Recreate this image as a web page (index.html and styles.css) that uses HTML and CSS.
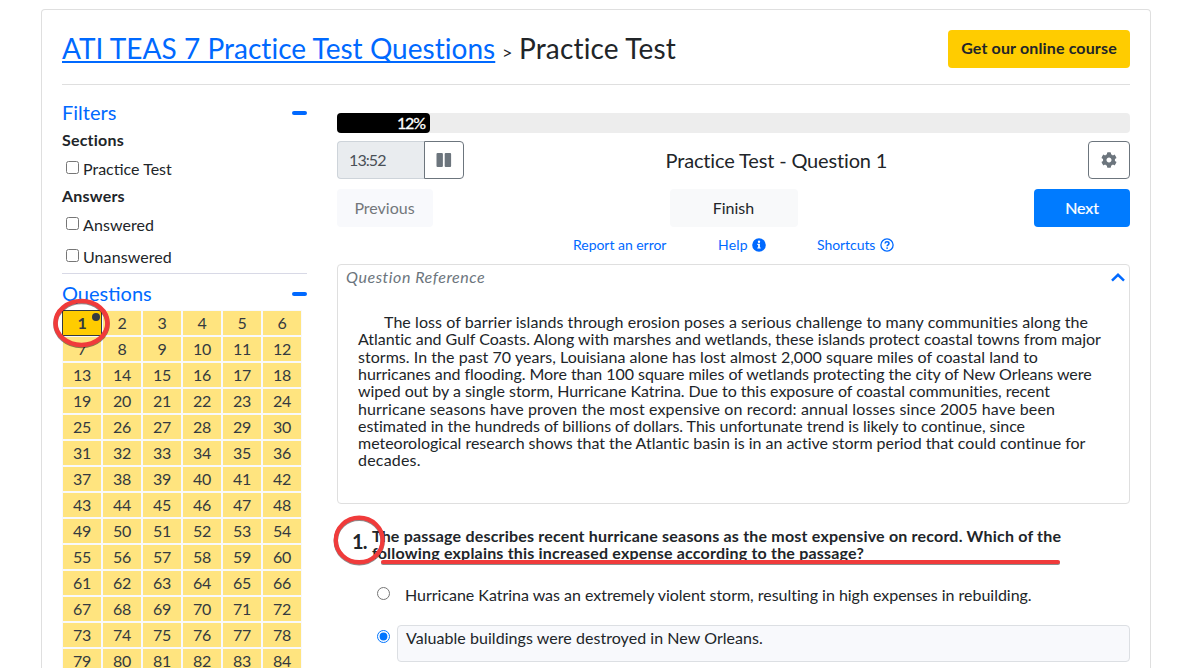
FILE: index.html
```html
<!DOCTYPE html>
<html lang="en">
<head>
<meta charset="utf-8">
<title>Practice Test</title>
<link rel="stylesheet" href="styles.css">
</head>
<body>
<div class="card">
  <header class="head">
    <h1 class="title"><a class="title-link" href="#">ATI TEAS 7 Practice Test Questions</a><span class="sep">&gt;</span><span class="title-here">Practice Test</span></h1>
    <button class="btn btn-course">Get our online course</button>
  </header>
  <div class="columns">
    <aside class="side">
      <section class="filters">
        <h2 class="side-title">Filters <i class="minus"></i></h2>
        <h3 class="group">Sections</h3>
        <label class="check"><input type="checkbox"><span>Practice Test</span></label>
        <h3 class="group">Answers</h3>
        <label class="check"><input type="checkbox"><span class="wide">Answered</span></label>
        <label class="check check-next"><input type="checkbox"><span class="wide">Unanswered</span></label>
      </section>
      <h2 class="side-title questions-title">Questions <i class="minus"></i></h2>
      <div class="grid" id="grid"></div>
      <svg class="mark mark-cell" width="60" height="52" viewBox="0 0 60 52"><ellipse cx="29.500" cy="25" rx="26" ry="22" fill="none" stroke="#f03b3b" stroke-width="4.600"/></svg>
    </aside>
    <main class="main">
      <div class="progress"><div class="bar" style="width:93px">12%</div></div>
      <div class="row tools">
        <div class="timer"><span class="time"><span class="time-text">13:52</span></span><button class="pause"><svg width="16" height="16" viewBox="0 0 16 16"><rect x="0.500" y="1" width="6.400" height="14" rx="1" fill="#6c757d"/><rect x="8.700" y="1" width="6.400" height="14" rx="1" fill="#6c757d"/></svg></button></div>
        <h2 class="q-title">Practice Test - Question 1</h2>
        <button class="gear"><svg width="16" height="16" viewBox="0 0 512 512"><path fill="#6c757d" d="M487.400 315.700l-42.600-24.600c4.300-23.200 4.300-47 0-70.200l42.600-24.600c4.900-2.800 7.100-8.600 5.500-14-11.100-35.600-30-67.800-54.700-94.600-3.800-4.100-10-5.100-14.800-2.300L380.800 110c-17.900-15.400-38.500-27.300-60.800-35.100V25.800c0-5.600-3.900-10.500-9.400-11.700-36.700-8.200-74.300-7.800-109.200 0-5.500 1.200-9.400 6.100-9.400 11.700V75c-22.200 7.900-42.800 19.800-60.800 35.100L88.700 85.500c-4.900-2.800-11-1.900-14.800 2.300-24.700 26.700-43.600 58.900-54.700 94.600-1.700 5.400.6 11.200 5.500 14L67.300 221c-4.300 23.200-4.300 47 0 70.200l-42.600 24.600c-4.900 2.800-7.100 8.600-5.500 14 11.100 35.600 30 67.800 54.700 94.600 3.800 4.100 10 5.100 14.800 2.300l42.600-24.600c17.900 15.400 38.500 27.300 60.800 35.100v49.200c0 5.600 3.900 10.500 9.400 11.700 36.700 8.200 74.300 7.800 109.200 0 5.500-1.200 9.400-6.100 9.400-11.700v-49.200c22.200-7.900 42.800-19.800 60.800-35.100l42.600 24.600c4.900 2.800 11 1.900 14.800-2.300 24.700-26.700 43.600-58.900 54.700-94.600 1.500-5.500-.7-11.300-5.600-14.100zM256 336c-44.100 0-80-35.900-80-80s35.900-80 80-80 80 35.900 80 80-35.900 80-80 80z"/></svg></button>
      </div>
      <div class="row nav">
        <button class="btn btn-side prev">Previous</button>
        <button class="btn finish">Finish</button>
        <button class="btn btn-side next">Next</button>
      </div>
      <div class="links">
        <a class="report" href="#">Report an error</a>
        <a class="help" href="#">Help <svg width="14" height="14" viewBox="0 0 14 14"><circle cx="7" cy="7" r="6.800" fill="#0069ff"/><path fill="#fff" d="M7 2.600a1.200 1.200 0 1 1 0 2.400a1.200 1.200 0 1 1 0-2.400zM5.300 5.700h2.600v3.700h.8v1.200H5.300V9.400h.8V6.900h-.8z"/></svg></a>
        <a class="short" href="#">Shortcuts <svg width="14" height="14" viewBox="0 0 14 14" fill="none" stroke="#0069ff"><circle cx="7" cy="7" r="6.100" stroke-width="1.300"/><path stroke-width="1.500" d="M5 5.500C5.200 4.200 6 3.800 7 3.800c1.100 0 2 .7 2 1.700C9 6.900 7.100 6.700 7.100 8.300"/><circle cx="7.100" cy="10.100" r=".9" fill="#0069ff" stroke="none"/></svg></a>
      </div>
      <section class="reference">
        <div class="ref-head"><em>Question Reference</em><svg width="14" height="9" viewBox="0 0 14 9"><path d="M1 7.700L7 1.800l6 5.900" fill="none" stroke="#0069ff" stroke-width="2.500"/></svg></div>
        <p class="passage">
          <span class="line indent l1">The loss of barrier islands through erosion poses a serious challenge to many communities along the</span>
          <span class="line l2">Atlantic and Gulf Coasts. Along with marshes and wetlands, these islands protect coastal towns from major</span>
          <span class="line l3">storms. In the past 70 years, Louisiana alone has lost almost 2,000 square miles of coastal land to</span>
          <span class="line l4">hurricanes and flooding. More than 100 square miles of wetlands protecting the city of New Orleans were</span>
          <span class="line l5">wiped out by a single storm, Hurricane Katrina. Due to this exposure of coastal communities, recent</span>
          <span class="line l6">hurricane seasons have proven the most expensive on record: annual losses since 2005 have been</span>
          <span class="line l7">estimated in the hundreds of billions of dollars. This unfortunate trend is likely to continue, since</span>
          <span class="line l8">meteorological research shows that the Atlantic basin is in an active storm period that could continue for</span>
          <span class="line l9">decades.</span>
        </p>
      </section>
      <section class="question">
        <span class="num">1.</span>
        <p class="prompt"><span class="line">The passage describes recent hurricane seasons as the most expensive on record. Which of the</span><span class="line">following explains this increased expense according to the passage?</span></p>
        <svg class="mark mark-num" width="56" height="54" viewBox="0 0 56 54"><ellipse cx="27.200" cy="26" rx="23.400" ry="22.300" fill="none" stroke="#f03b3b" stroke-width="4.400"/></svg>
        <i class="mark mark-line"></i>
      </section>
      <label class="option"><input type="radio" name="a"><span class="answer a1">Hurricane Katrina was an extremely violent storm, resulting in high expenses in rebuilding.</span></label>
      <label class="option"><input type="radio" name="a" checked><span class="answer picked">Valuable buildings were destroyed in New Orleans.</span></label>
    </main>
  </div>
</div>
<script src="grid.js"></script>
</body>
</html>
```
FILE: styles.css
```css
* { box-sizing: border-box; }
html, body { height: 100%; overflow: hidden; }
body { margin: 0; padding: 9px 42px 0 41px; background: #fff; color: #212529; font: 16px/24px Lato, sans-serif; font-kerning: normal; }
h1, h2, h3, p { margin: 0; font-size: 16px; font-weight: 400; }
button { font: inherit; padding: 0; cursor: pointer; }
a { color: #0069ff; text-decoration: none; }
svg { display: block; }

.card { width: 1110px; height: 659px; overflow: hidden; border: 1px solid #dfdfdf; border-bottom: 0; border-radius: 4px 4px 0 0; padding: 20px 20px 0; }
.head { display: flex; justify-content: space-between; height: 55px; border-bottom: 1px solid #dfdfdf; }
.title { display: flex; align-items: baseline; font-size: 28px; line-height: 36px; white-space: nowrap; }
.title-link { width: 433px; letter-spacing: .03px; text-decoration: underline; text-decoration-thickness: 2px; text-underline-offset: 2px; text-decoration-skip-ink: none; }
.sep { width: 24px; padding-left: 7px; font-size: 18px; line-height: 20px; }
.title-here { letter-spacing: .16px; }
.btn { height: 38px; border: 0; border-radius: 4px; padding-bottom: 1px; }
.btn-course { width: 182px; background: #fc0; color: #212529; font-weight: 700; letter-spacing: .147px; padding-bottom: 2px; }

.columns { display: flex; gap: 30px; }
.side { position: relative; width: 245px; padding-top: 16px; }
.filters { height: 173px; border-bottom: 1px solid #d8d9e6; }
.side-title { display: flex; justify-content: space-between; align-items: center; height: 24px; line-height: 22px; padding-bottom: 2px; color: #0069ff; font-size: 20px; }
.minus { width: 15px; height: 4px; margin-top: 2px; border-radius: 2px; background: #0069ff; }
.group { height: 32px; line-height: 30px; font-weight: 700; letter-spacing: .2px; }
.group + .check { margin-top: -3px; }
.check + .group { margin-top: -1px; }
.check { display: flex; align-items: center; height: 28px; padding-left: 4px; gap: 4px; }
.check input { width: 13px; height: 13px; margin: 0 0 2px; }
.check span { padding-top: 2px; }
.check-next { margin-top: 4px; }
.wide { letter-spacing: .08px; }
.questions-title { margin-top: 8px; }
.grid { display: grid; grid-template-columns: repeat(6, 38px); grid-auto-rows: 24px; gap: 2px; width: 240px; margin-top: 4px; padding: 1px; background: #f8f9fc; }
.cell { background: #ffe47f; color: #343a40; text-align: center; line-height: 23px; letter-spacing: -.2px; }
.current { position: relative; margin: -1px; border: 1px solid #343a40; background: #fc0; font-weight: 700; }
.current::after { content: ""; position: absolute; top: 2px; right: 1px; width: 8px; height: 8px; border-radius: 50%; background: #343a40; }
.mark { position: absolute; filter: drop-shadow(0 1px .5px rgba(0, 0, 0, .45)); }
.mark-cell { left: -10px; top: 213px; }

.main { width: 793px; padding-top: 28px; }
.progress { height: 20px; border-radius: 4px; background: #ededed; }
.bar { height: 20px; padding-right: 5px; border-radius: 4px; background: #000; color: #fff; text-align: right; line-height: 20px; letter-spacing: -1.1px; -webkit-text-stroke: .3px #fff; }
.row { display: flex; justify-content: space-between; height: 38px; }
.tools { margin-top: 8px; }
.timer { display: flex; width: 127px; }
.time { width: 87px; padding-left: 11px; border: 1px solid #ced4da; border-right: 0; border-radius: 4px 0 0 4px; background: #e9ecef; color: #495057; line-height: 35px; }
.time-text { letter-spacing: -.9px; }
.pause, .gear { display: flex; align-items: center; justify-content: center; border: 1px solid #6c757d; background: #fff; }
.pause { width: 40px; border-radius: 0 4px 4px 0; }
.gear { width: 42px; border-radius: 4px; }
.q-title { width: 222px; margin-left: 116px; margin-right: 115px; font-size: 20px; line-height: 39px; letter-spacing: -.15px; white-space: nowrap; }
.nav { margin-top: 10px; }
.btn-side { width: 96px; }
.prev { background: #f8f9fc; color: #73777b; padding-right: 1px; }
.finish { width: 128px; background: #f8f9fa; color: #212529; }
.next { background: #007bff; color: #fff; letter-spacing: -.1px; -webkit-text-stroke: .2px #fff; }
.links { display: flex; height: 37px; padding-left: 236px; font-size: 14px; line-height: 34px; white-space: nowrap; }
.links a { display: flex; align-items: center; justify-content: space-between; height: 35px; }
.report { width: 93px; letter-spacing: -.03px; }
.help { width: 48px; margin-left: 52px; letter-spacing: .2px; }
.short { width: 77px; margin-left: 51px; letter-spacing: -.06px; }

.reference { height: 240px; border: 1px solid #dfdfdf; border-radius: 4px; }
.ref-head { display: flex; justify-content: space-between; align-items: center; height: 25px; padding: 0 4px 0 8px; color: #6c757d; }
.ref-head em { padding-bottom: 2px; letter-spacing: .55px; }
.passage { padding: 23.200px 0 0 20px; line-height: 17.280px; }
.line { display: block; white-space: nowrap; }
.indent { padding-left: 26px; }
.l1 { letter-spacing: .067px; }
.l2 { letter-spacing: -.02px; }
.l3 { letter-spacing: .038px; }
.l4 { letter-spacing: -.051px; }
.l5, .l7 { letter-spacing: -.035px; }
.l6 { letter-spacing: .129px; }
.l8 { letter-spacing: -.024px; }
.l9 { letter-spacing: .2px; }

.question { position: relative; display: flex; height: 74px; padding: 23px 0 0 15px; }
.num { width: 20px; padding-top: 2px; font-size: 20px; font-weight: 700; line-height: 24px; letter-spacing: -.8px; }
.prompt { font-weight: 700; line-height: 17.280px; letter-spacing: .196px; }
.mark-num { left: -5px; top: 10px; }
.mark-line { left: 44px; top: 56px; width: 679px; height: 4px; border-radius: 2px; background: #f03b3b; }
.option { display: flex; height: 43px; padding-left: 40px; }
.option input { width: 13px; height: 13px; margin: 9px 7px 0 0; }
.answer { flex: 1; height: 37px; margin-top: 4px; padding: 0 8px; line-height: 24px; border: 1px solid transparent; border-radius: 4px; letter-spacing: .05px; }
.a1 { padding-left: 7px; letter-spacing: -.02px; }
.picked { background: #f8f9fc; border-color: #dcdfe3; }
```
FILE: grid.js
```js
const grid = document.getElementById("grid");
for (let n = 1; n <= 84; n++) {
  const cell = document.createElement("div");
  cell.className = n === 1 ? "cell current" : "cell";
  cell.textContent = n;
  grid.appendChild(cell);
}
```
